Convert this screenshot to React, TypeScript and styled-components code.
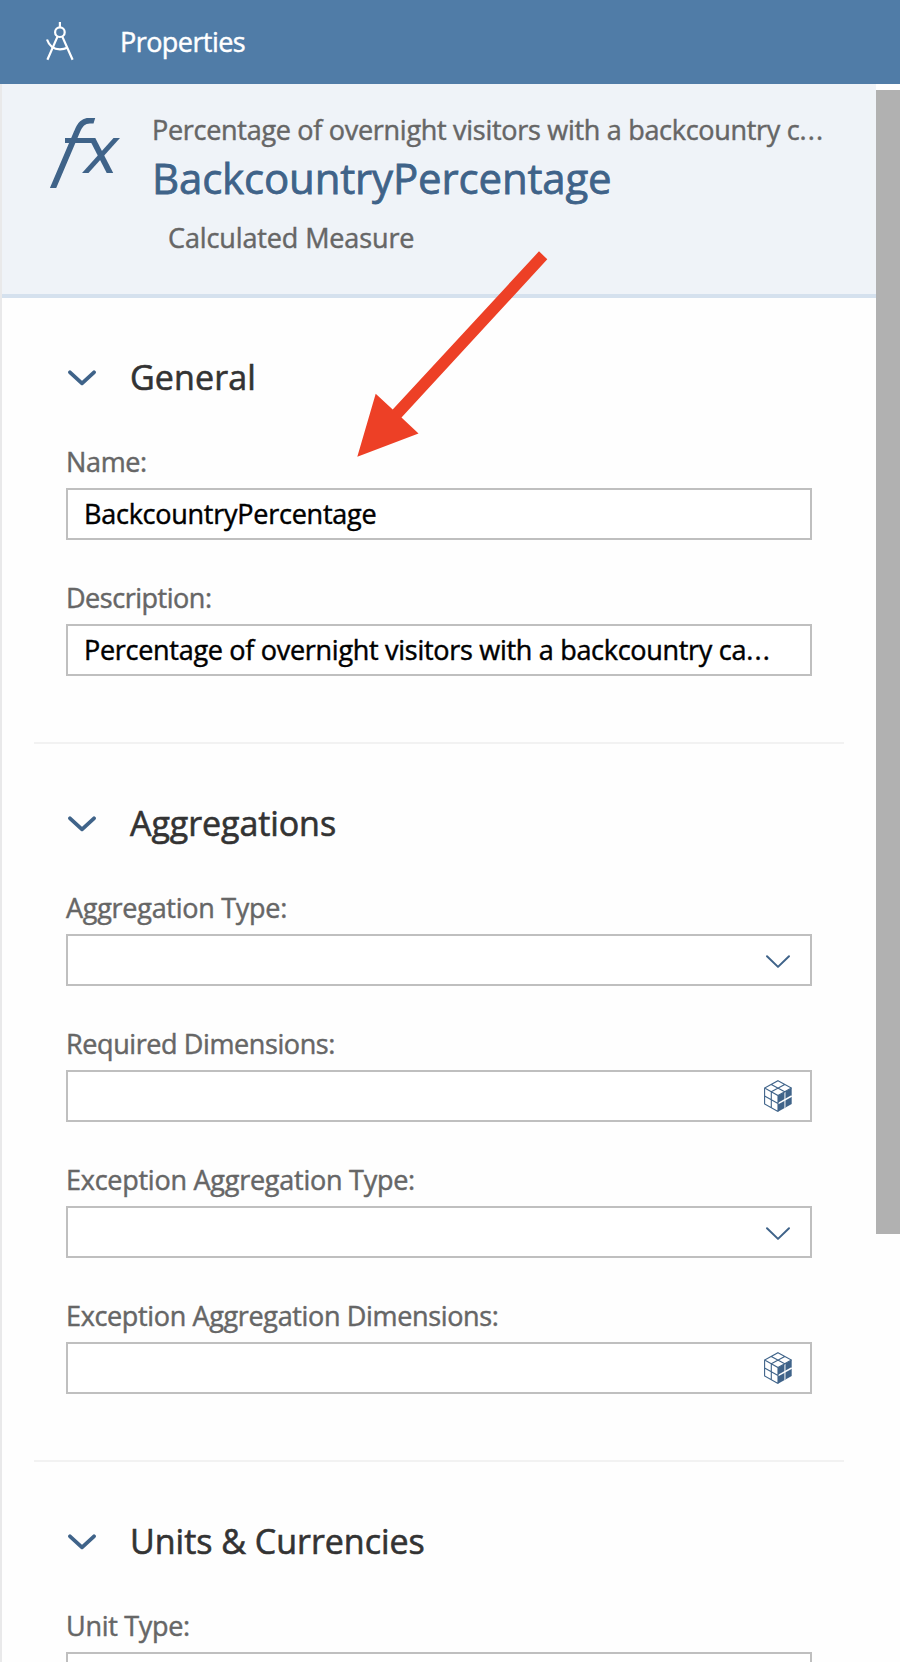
import React from "react";
import styled, { createGlobalStyle } from "styled-components";

const accent = "#3f6389";

const GlobalStyle = createGlobalStyle`
  *, *::before, *::after { box-sizing: border-box; }
  body {
    margin: 0;
    background: #fefefe;
    font-family: "Open Sans", "Noto Sans", sans-serif;
    font-size: 27px;
    -webkit-text-stroke: 0.45px currentColor;
  }
`;

const Page = styled.div`
  position: relative;
  display: flex;
  flex-direction: column;
  width: 900px;
  height: 1662px;
  overflow: hidden;
`;

const TitleBar = styled.header`
  display: flex;
  align-items: center;
  flex: none;
  height: 84px;
  padding-left: 44px;
  gap: 44px;
  background: #507ca7;
  color: #fff;
`;

const BarTitle = styled.h1`
  margin: 0;
  font-size: 27px;
  font-weight: 400;
  line-height: 36px;
  letter-spacing: -0.56px;
`;

const Body = styled.div`
  display: flex;
  flex: 1;
  min-height: 0;
`;

const Panel = styled.main`
  width: 876px;
  border-left: 2px solid #e9e9ea;
  overflow: hidden;
`;

const ScrollTrack = styled.div`
  flex: 1;
  padding-top: 6px;
`;

const ScrollThumb = styled.div`
  height: 1144px;
  background: #b1b1b1;
`;

const ObjectHeader = styled.section`
  display: flex;
  height: 214px;
  padding: 28px 0 0 48px;
  gap: 32px;
  background: #eff3f8;
  border-bottom: 4px solid #d5e1ee;
`;

const FxSvg = styled.svg`
  flex: none;
  margin-top: 6px;
`;

const ObjectText = styled.div`
  display: flex;
  flex-direction: column;
`;

const ObjectDescription = styled.div`
  color: #666;
  line-height: 36px;
  letter-spacing: -0.29px;
  white-space: nowrap;
`;

const Ellipsis = styled.span`
  letter-spacing: 1.2px;
`;

const ObjectName = styled.h2`
  margin: 5px 0 17px;
  color: ${accent};
  font-size: 42px;
  font-weight: 400;
  line-height: 50px;
  letter-spacing: -0.16px;
  text-shadow: 0 0 3px #fff;
  -webkit-text-stroke-width: 0.8px;
`;

const ObjectType = styled.div`
  margin-left: 16px;
  color: #666;
  line-height: 36px;
  letter-spacing: -0.12px;
`;

const Section = styled.section`
  margin: 0 32px;
  padding: 54px 32px 66px;
  border-bottom: 2px solid #f2f2f2;
`;

const SectionHead = styled.div`
  display: flex;
  align-items: center;
  height: 50px;
  margin-bottom: 42px;
  padding-left: 2px;
  gap: 34px;
`;

const SectionTitle = styled.h3<{ $tracking: number }>`
  margin: 0;
  color: #333;
  font-size: 34px;
  font-weight: 400;
  line-height: 50px;
  letter-spacing: ${(p) => p.$tracking}px;
  -webkit-text-stroke-width: 0.6px;
`;

const Fields = styled.div`
  display: grid;
  gap: 40px;
`;

const Field = styled.label`
  display: flex;
  flex-direction: column;
  gap: 8px;
`;

const FieldLabel = styled.span<{ $tracking: number }>`
  color: #666;
  line-height: 36px;
  letter-spacing: ${(p) => p.$tracking}px;
`;

const FieldBox = styled.span`
  display: flex;
  align-items: center;
  justify-content: space-between;
  width: 746px;
  height: 52px;
  padding: 0 18px 0 16px;
  border: 2px solid #bfbfbf;
  background: #fff;
`;

const FieldValue = styled.span<{ $tracking: number }>`
  color: #000;
  line-height: 36px;
  letter-spacing: ${(p) => p.$tracking}px;
  white-space: nowrap;
`;

const ArrowOverlay = styled.svg`
  position: absolute;
  left: 350px;
  top: 245px;
  pointer-events: none;
`;

const CompassIcon = () => (
  <svg width="32" height="40" viewBox="44 22 32 40" fill="none" stroke="#fff" strokeWidth="2.2">
    <path d="M59.9 22v5" />
    <circle cx="59.9" cy="32.2" r="4.8" />
    <path d="M57.6 36.4 47.4 59.8M62.2 36.4 72.6 59.8" />
    <path d="M47 39.5C49.3 46.2 54 49.4 60 49.4c2.700 0 5-.5 7.200-1.600" />
  </svg>
);

const FunctionIcon = () => (
  <FxSvg width="70" height="70" viewBox="50 118 70 70" fill="none" stroke={accent}>
    <clipPath id="fx-cross">
      <path d="M80 138h40v35h-40z" />
    </clipPath>
    <clipPath id="fx-hook">
      <path d="M50 118H95.200L93.600 123.200V188H50z" />
    </clipPath>
    <path d="M52 190.500 76.500 133C80 124 83.500 120.600 90 120.600h6" strokeWidth="5.800" clipPath="url(#fx-hook)" />
    <path d="M65 140.500H93" strokeWidth="5" />
    <g clipPath="url(#fx-cross)">
      <path d="M91 136 111 175" strokeWidth="5.800" />
      <path d="M119 135.500 83 175.500" strokeWidth="4.800" />
    </g>
  </FxSvg>
);

const SectionChevron = () => (
  <svg width="28" height="18" viewBox="0 0 28 18" fill="none" stroke={accent} strokeWidth="3.8" strokeLinecap="round" strokeLinejoin="round">
    <path d="M2 4.300 14 15.300 26 4.300" />
  </svg>
);

const DropdownIcon = () => (
  <svg width="28" height="32" viewBox="0 0 28 32" fill="none" stroke={accent} strokeWidth="2" strokeLinecap="round" strokeLinejoin="round">
    <path d="M3 12.300 14 22.900 25 12.300" />
  </svg>
);

const CubeIcon = () => (
  <svg width="28" height="32" viewBox="0 0 28 32" fill="none" stroke={accent}>
    <path d="M14 15.700 27.700 8V24L14 31.700z" fill={accent} stroke="none" />
    <path d="M20.900 11.800V27.900" stroke="#b9c6d4" strokeWidth="1.600" />
    <path d="M14 23.700 27.700 16" stroke="#fff" strokeWidth="1.500" />
    <path d="M14 .7 27.400 8 14 15.500.6 8zM.6 8V24L14 31.400M14 15.500V31.400M7.300 11.800V27.700M.6 16 14 23.500M7.300 4.400 20.700 11.800M20.700 4.400 7.300 11.800" strokeWidth="1.100" />
  </svg>
);

type Icon = "dropdown" | "cube";

interface FieldSpec {
  label: string;
  tracking: number;
  value?: string;
  valueTracking?: number;
  truncated?: boolean;
  icon?: Icon;
}

interface SectionSpec {
  title: string;
  tracking: number;
  fields: FieldSpec[];
}

const sections: SectionSpec[] = [
  {
    title: "General",
    tracking: 0.1,
    fields: [
      { label: "Name:", tracking: -0.35, value: "BackcountryPercentage", valueTracking: -0.25 },
      {
        label: "Description:",
        tracking: -0.48,
        value: "Percentage of overnight visitors with a backcountry ca",
        valueTracking: -0.29,
        truncated: true,
      },
    ],
  },
  {
    title: "Aggregations",
    tracking: -0.08,
    fields: [
      { label: "Aggregation Type:", tracking: -0.27, icon: "dropdown" },
      { label: "Required Dimensions:", tracking: -0.4, icon: "cube" },
      { label: "Exception Aggregation Type:", tracking: -0.25, icon: "dropdown" },
      { label: "Exception Aggregation Dimensions:", tracking: -0.35, icon: "cube" },
    ],
  },
  {
    title: "Units & Currencies",
    tracking: -0.02,
    fields: [{ label: "Unit Type:", tracking: -0.3, icon: "dropdown" }],
  },
];

export default function App() {
  return (
    <Page>
      <GlobalStyle />
      <TitleBar>
        <CompassIcon />
        <BarTitle>Properties</BarTitle>
      </TitleBar>
      <Body>
        <Panel>
          <ObjectHeader>
            <FunctionIcon />
            <ObjectText>
              <ObjectDescription>
                Percentage of overnight visitors with a backcountry c<Ellipsis>...</Ellipsis>
              </ObjectDescription>
              <ObjectName>BackcountryPercentage</ObjectName>
              <ObjectType>Calculated Measure</ObjectType>
            </ObjectText>
          </ObjectHeader>
          {sections.map((section) => (
            <Section key={section.title}>
              <SectionHead>
                <SectionChevron />
                <SectionTitle $tracking={section.tracking}>{section.title}</SectionTitle>
              </SectionHead>
              <Fields>
                {section.fields.map((field) => (
                  <Field key={field.label}>
                    <FieldLabel $tracking={field.tracking}>{field.label}</FieldLabel>
                    <FieldBox>
                      <FieldValue $tracking={field.valueTracking ?? 0}>
                        {field.value}
                        {field.truncated && <Ellipsis>...</Ellipsis>}
                      </FieldValue>
                      {field.icon === "dropdown" && <DropdownIcon />}
                      {field.icon === "cube" && <CubeIcon />}
                    </FieldBox>
                  </Field>
                ))}
              </Fields>
            </Section>
          ))}
        </Panel>
        <ScrollTrack>
          <ScrollThumb />
        </ScrollTrack>
      </Body>
      <ArrowOverlay width="205" height="220" viewBox="350 245 205 220">
        <path d="M357.300 456.700 375.700 393.700 392.700 409.500 539 251.300 547.300 259.300 401.500 417.400 418.500 433.500z" fill="#ed4026" />
      </ArrowOverlay>
    </Page>
  );
}
